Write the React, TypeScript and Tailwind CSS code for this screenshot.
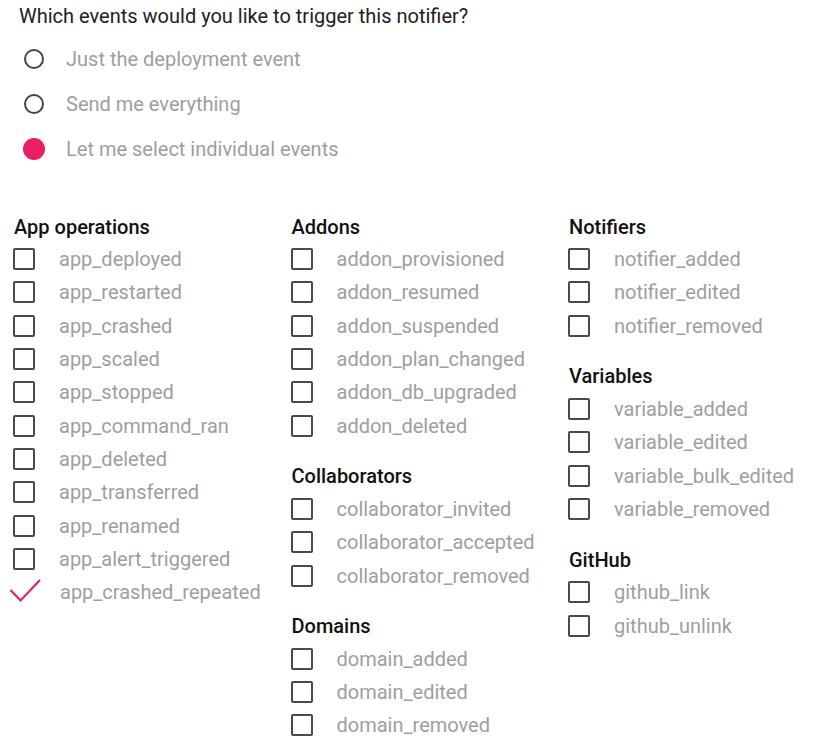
import { useState } from 'react';

type Group = { title: string; events: string[] };

const columns: Group[][] = [
  [
    {
      title: 'App operations',
      events: [
        'app_deployed',
        'app_restarted',
        'app_crashed',
        'app_scaled',
        'app_stopped',
        'app_command_ran',
        'app_deleted',
        'app_transferred',
        'app_renamed',
        'app_alert_triggered',
        'app_crashed_repeated',
      ],
    },
  ],
  [
    {
      title: 'Addons',
      events: [
        'addon_provisioned',
        'addon_resumed',
        'addon_suspended',
        'addon_plan_changed',
        'addon_db_upgraded',
        'addon_deleted',
      ],
    },
    {
      title: 'Collaborators',
      events: ['collaborator_invited', 'collaborator_accepted', 'collaborator_removed'],
    },
    { title: 'Domains', events: ['domain_added', 'domain_edited', 'domain_removed'] },
  ],
  [
    { title: 'Notifiers', events: ['notifier_added', 'notifier_edited', 'notifier_removed'] },
    {
      title: 'Variables',
      events: ['variable_added', 'variable_edited', 'variable_bulk_edited', 'variable_removed'],
    },
    { title: 'GitHub', events: ['github_link', 'github_unlink'] },
  ],
];

const radioOptions = [
  { id: 'deployment', label: 'Just the deployment event' },
  { id: 'all', label: 'Send me everything' },
  { id: 'custom', label: 'Let me select individual events' },
];

function Checkbox({ checked }: { checked: boolean }) {
  if (checked) {
    return (
      <svg className="w-[32px] h-[26px] -ml-[4px] mr-[19px] shrink-0" viewBox="0 0 32 26" fill="none">
        <polyline points="1.5,11 11.5,21.5 31,1" stroke="#e91e63" strokeWidth="2.2" />
      </svg>
    );
  }
  return <span className="w-[22px] h-[22px] shrink-0 border-[2.5px] border-[#4a4a4a] rounded-[2px] mr-[24px]" />;
}

export default function App() {
  const [mode, setMode] = useState('custom');
  const [selected, setSelected] = useState<string[]>(['app_crashed_repeated']);

  const toggle = (ev: string) =>
    setSelected((s) => (s.includes(ev) ? s.filter((x) => x !== ev) : [...s, ev]));

  return (
    <div className="w-[825px] h-[746px] bg-white overflow-hidden font-['Roboto','Liberation_Sans',sans-serif]">
      {/* Question */}
      <p className="pl-[19px] h-[32px] leading-[32px] text-[20px] text-[#212121]">
        Which events would you like to trigger this notifier?
      </p>

      {/* Radio options */}
      <div className="mt-[4.5px] pl-[24px]">
        {radioOptions.map((opt) => {
          const active = mode === opt.id;
          return (
            <label key={opt.id} className="h-[45px] flex items-center cursor-pointer" onClick={() => setMode(opt.id)}>
              {active ? (
                <span className="w-[22px] h-[22px] -ml-[1px] rounded-full bg-[#e91e63] shrink-0" />
              ) : (
                <span className="w-[20px] h-[20px] rounded-full border-[2px] border-[#444] shrink-0" />
              )}
              <span className={`text-[20px] text-[#9e9e9e] ${active ? 'ml-[21px]' : 'ml-[22px]'}`}>{opt.label}</span>
            </label>
          );
        })}
      </div>

      {/* Event groups */}
      <div className="mt-[40px] pl-[14px] flex">
        {columns.map((groups, i) => (
          <div key={i} className="w-[277.5px] shrink-0 flex flex-col gap-[19px]">
            {groups.map((g) => (
              <div key={g.title}>
                <h3 className="h-[31px] leading-[31px] text-[20px] font-medium text-[#111]">{g.title}</h3>
                {g.events.map((ev) => (
                  <div
                    key={ev}
                    className="h-[33.3px] flex items-center -ml-[1px] cursor-pointer"
                    onClick={() => toggle(ev)}
                  >
                    <Checkbox checked={selected.includes(ev)} />
                    <span className="text-[20px] text-[#9e9e9e]">{ev}</span>
                  </div>
                ))}
              </div>
            ))}
          </div>
        ))}
      </div>
    </div>
  );
}
